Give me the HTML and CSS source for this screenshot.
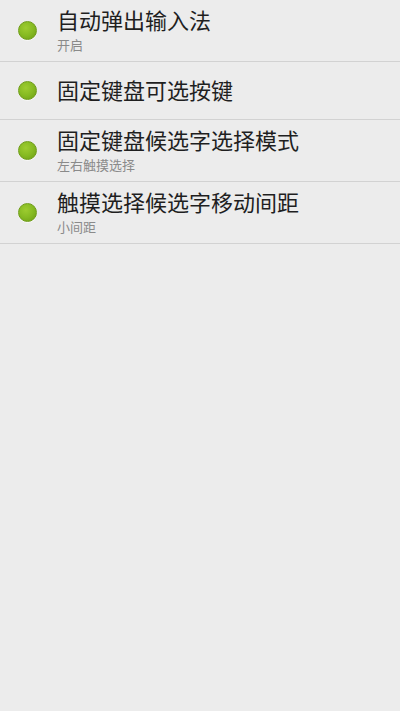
FILE: index.html
```html
<!DOCTYPE html>
<html lang="zh">
<head>
<meta charset="utf-8">
<link rel="stylesheet" href="styles.css">
</head>
<body>
<ul class="list">
  <li class="row">
    <span class="dot"></span>
    <div class="text">
      <div class="title">自动弹出输入法</div>
      <div class="sub">开启</div>
    </div>
  </li>
  <li class="row row-single">
    <span class="dot"></span>
    <div class="text">
      <div class="title">固定键盘可选按键</div>
    </div>
  </li>
  <li class="row">
    <span class="dot"></span>
    <div class="text">
      <div class="title">固定键盘候选字选择模式</div>
      <div class="sub">左右触摸选择</div>
    </div>
  </li>
  <li class="row">
    <span class="dot"></span>
    <div class="text">
      <div class="title">触摸选择候选字移动间距</div>
      <div class="sub">小间距</div>
    </div>
  </li>
</ul>
</body>
</html>
```

FILE: styles.css
```css
html, body {
  margin: 0;
  padding: 0;
  background: #ececec;
  font-family: "Noto Sans CJK SC", "Noto Sans", sans-serif;
}
.list {
  list-style: none;
  margin: 0;
  padding: 0;
}
.row {
  display: flex;
  align-items: center;
  gap: 19px;
  box-sizing: border-box;
  min-height: 62px;
  padding: 6px 10px 7px 18px;
  border-bottom: 1px solid #d2d2d2;
}
.row-single {
  min-height: 58px;
  padding-top: 0;
  padding-bottom: 4px;
}
.row-single .dot {
  margin-top: 4px;
}
.dot {
  flex: none;
  width: 19px;
  height: 19px;
  border-radius: 50%;
  box-sizing: border-box;
  background: radial-gradient(circle at 40% 35%, #9dcc30 0%, #86ba22 50%, #6c9c14 100%);
  border: 1px solid #6f9d18;
  box-shadow: 0 1px 0 rgba(255,255,255,0.6);
}
.text {
  display: flex;
  flex-direction: column;
  margin-left: 1px;
}
.title {
  font-size: 22px;
  line-height: 26px;
  color: #1f1f1f;
}
.sub {
  margin-top: 4px;
  font-size: 13px;
  line-height: 18px;
  color: #8a8a8a;
}
```
